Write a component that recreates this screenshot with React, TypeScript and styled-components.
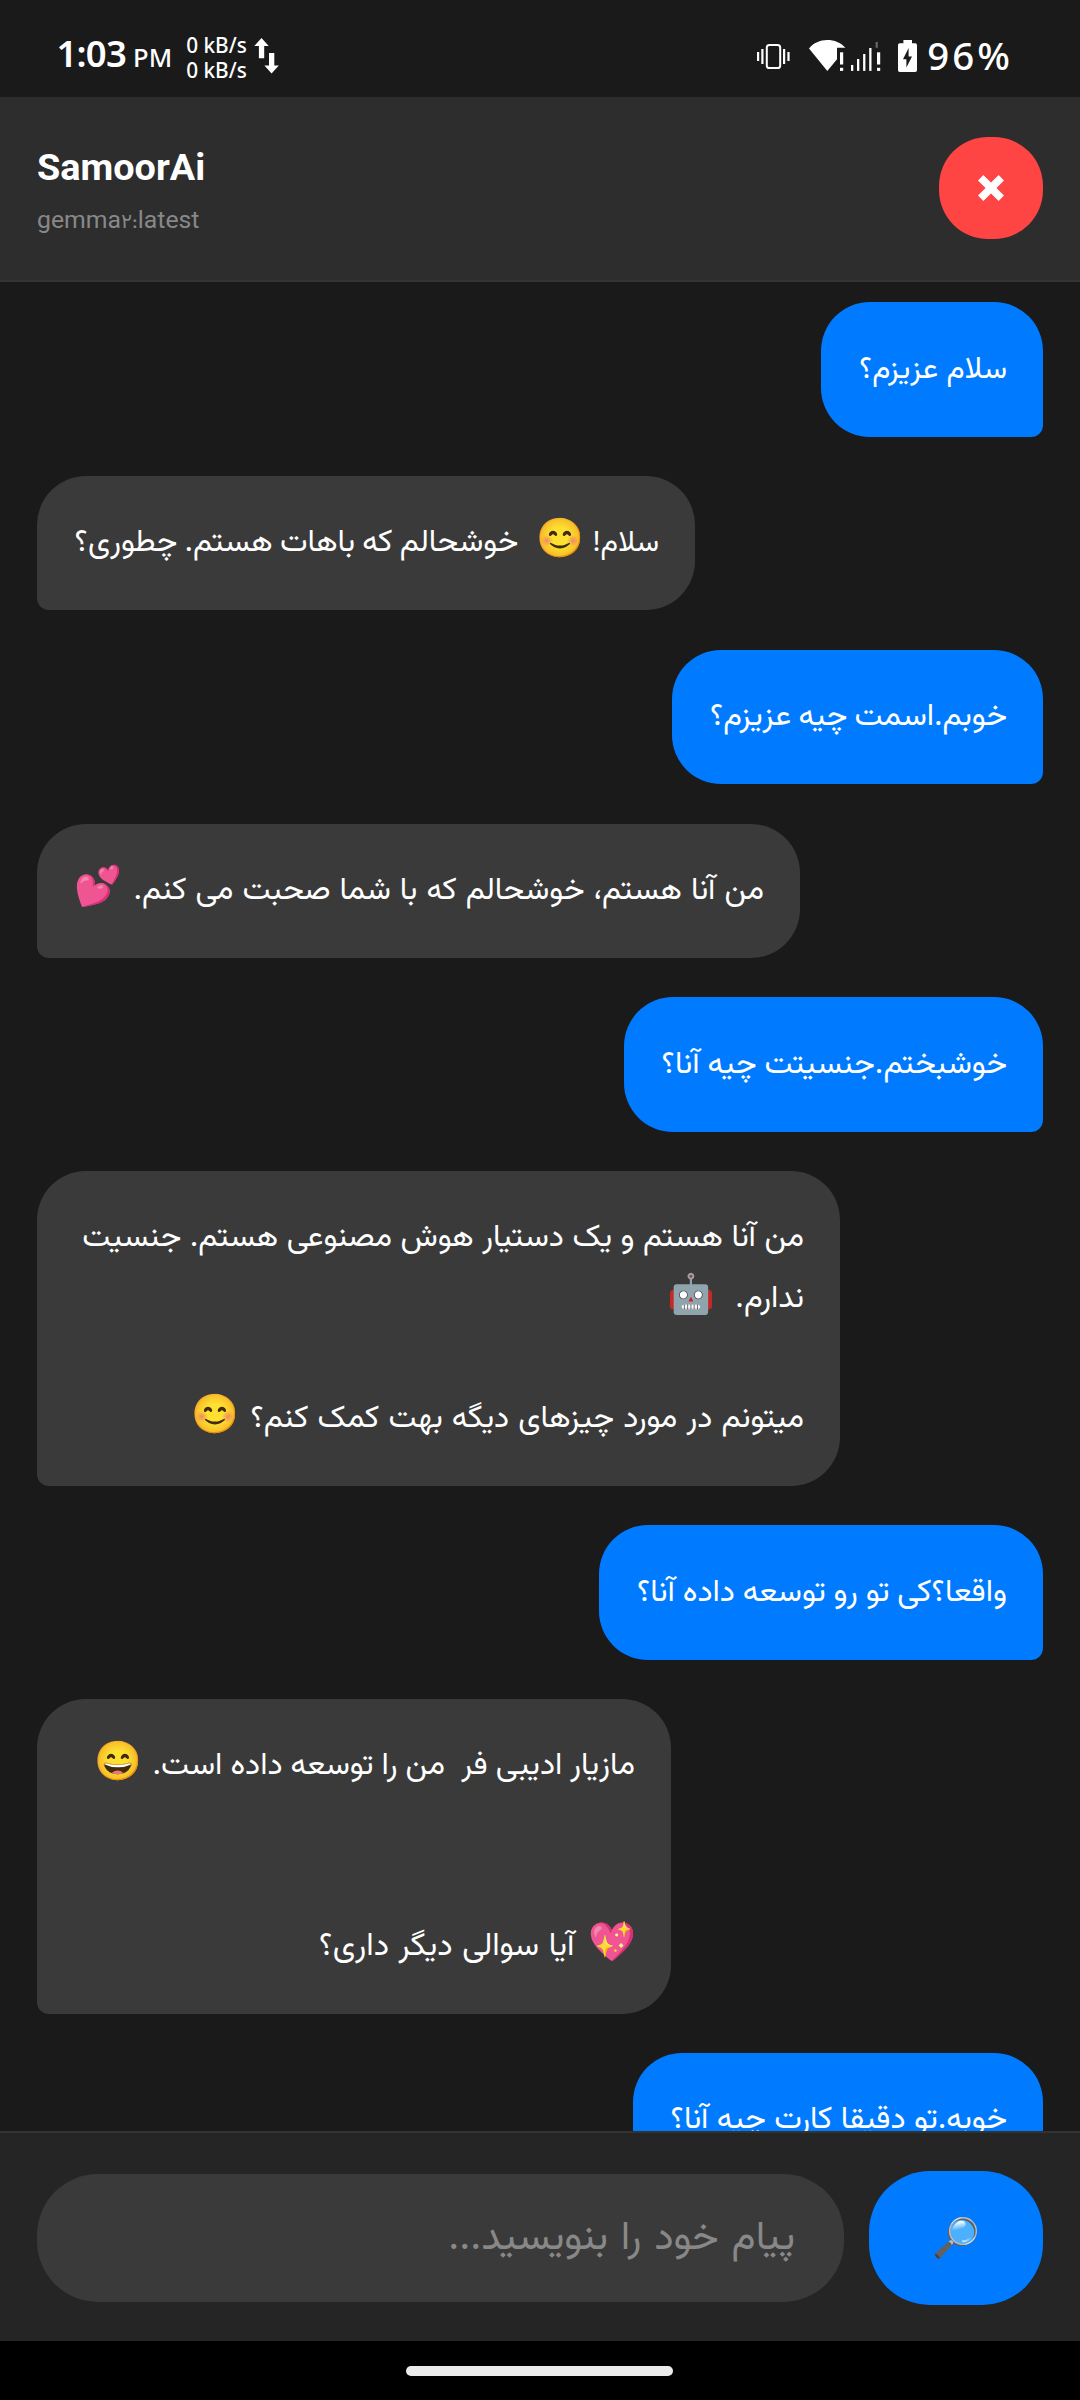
import React from "react";
import styled, { createGlobalStyle } from "styled-components";

const persian = '"Vazirmatn", "DejaVu Sans", sans-serif';
const latin = 'Roboto, "Noto Sans", sans-serif';

const GlobalStyle = createGlobalStyle`
  *, *::before, *::after { box-sizing: border-box; }
  html, body { margin: 0; background: #1a1a1a; }
`;

const Screen = styled.div`
  display: flex;
  flex-direction: column;
  width: 1080px;
  height: 2400px;
  overflow: hidden;
  background: #1a1a1a;
  color: #fff;
  font-family: ${latin};
`;

/* ---------- status bar ---------- */

const StatusBar = styled.div`
  display: flex;
  align-items: center;
  flex: none;
  height: 97px;
  padding: 12px 67px 0 56.5px;
  font-family: "Noto Sans", "Open Sans", sans-serif;
  font-weight: 500;
  white-space: nowrap;
`;

const Clock = styled.div`
  padding-top: 2px;
  font-size: 36.5px;
  font-weight: 600;
  letter-spacing: -0.8px;
  line-height: 44px;
`;

const Meridiem = styled.span`
  margin-left: 7px;
  font-size: 25.6px;
  font-weight: 500;
  letter-spacing: 0;
`;

const NetSpeed = styled.div`
  margin: 0 7px 0 14px;
  padding-top: 6px;
  font-size: 20.8px;
  line-height: 25px;
`;

const StatusIcons = styled.div`
  display: flex;
  align-items: center;
  margin-left: auto;
`;

const Icon = styled.svg<{ $ml?: number }>`
  display: block;
  flex: none;
  height: 36px;
  margin: 2px 0 0 ${(p) => p.$ml ?? 0}px;
`;

const Battery = styled.span`
  margin-left: 10px;
  font-size: 38.4px;
  letter-spacing: 3px;
  line-height: 44px;
`;

/* ---------- header ---------- */

const Header = styled.header`
  display: flex;
  align-items: center;
  justify-content: space-between;
  flex: none;
  height: 185px;
  padding: 0 37px 1px;
  background: #2d2d2d;
  border-bottom: 2px solid #333;
`;

const Heading = styled.div`
  padding-top: 6px;
`;

const Title = styled.h1`
  margin: 0;
  font-size: 37.8px;
  font-weight: 700;
  line-height: 46px;
`;

const Model = styled.div`
  height: 36px;
  margin-top: 12px;
  color: #888;
  font-size: 24.8px;
  line-height: 36px;
`;

const ModelTag = styled.span`
  font-family: ${persian};
  font-size: 21px;
  line-height: 1;
`;

const CloseButton = styled.button`
  display: flex;
  align-items: center;
  justify-content: center;
  width: 104px;
  height: 102px;
  padding: 0;
  border: 0;
  border-radius: 49px;
  background: #ff4444;
`;

/* ---------- chat ---------- */

const Chat = styled.main`
  display: flex;
  flex-direction: column;
  gap: 39.3px;
  flex: 1;
  min-height: 0;
  padding: 20.2px 37px 0;
  overflow: hidden;
`;

const Bubble = styled.div<{ $mine?: boolean; $width: number }>`
  flex: none;
  align-self: ${(p) => (p.$mine ? "flex-end" : "flex-start")};
  width: ${(p) => p.$width}px;
  padding: 38.4px 36px 36px;
  border-radius: ${(p) => (p.$mine ? "49px 49px 12px 49px" : "49px 49px 49px 12px")};
  background: ${(p) => (p.$mine ? "#007bff" : "#3a3a3a")};
  direction: rtl;
  font-family: ${persian};
  font-size: 31.5px;
`;

const Line = styled.p`
  height: 60.1px;
  margin: 0;
  line-height: 60px;
  white-space: pre;
`;

const Words = styled.span<{ $space: number; $size: number }>`
  font-size: ${(p) => p.$size}px;
  line-height: 1;
  word-spacing: ${(p) => p.$space}px;
`;

const Emoji = styled.span`
  display: inline-block;
  width: 47px;
  margin: 0 3px 0 4px;
  font-family: "Noto Color Emoji", sans-serif;
  font-size: 38.4px;
  line-height: 1;
  text-align: center;
  direction: ltr;
  &:first-child { margin-right: 0; }
`;

/* ---------- composer ---------- */

const Composer = styled.footer`
  display: flex;
  align-items: center;
  gap: 25px;
  flex: none;
  height: 210px;
  padding: 2px 37px 0;
  border-top: 2px solid #333;
  background: #252525;
`;

const Field = styled.input`
  flex: 1;
  min-width: 0;
  height: 128px;
  padding: 2px 49px 0;
  border: 0;
  border-radius: 61px;
  background: #3a3a3a;
  color: #fff;
  direction: rtl;
  font-family: ${persian};
  font-size: 40.5px;
  word-spacing: 2px;
  &::placeholder { color: #888; opacity: 1; }
`;

const SendButton = styled.button`
  display: flex;
  align-items: center;
  justify-content: center;
  width: 174px;
  height: 134px;
  padding: 0;
  border: 0;
  border-radius: 61px;
  background: #007bff;
  ${Emoji} { margin: 0; }
`;

const NavBar = styled.div`
  display: flex;
  align-items: center;
  justify-content: center;
  flex: none;
  height: 59px;
  padding-right: 1px;
  background: #000;
`;

const NavPill = styled.div`
  width: 267px;
  height: 10px;
  border-radius: 5px;
  background: #ebebeb;
`;

/* `spaces` and `sizes` adjust the word gap and type size of each run of words between emoji. */
type Row = { text: string; spaces?: number[]; sizes?: number[] };
type Message = { mine?: boolean; width: number; lines: Row[] };

const messages: Message[] = [
  { mine: true, width: 222, lines: [{ text: "سلام عزیزم؟", spaces: [0.2], sizes: [30.5] }] },
  { width: 658, lines: [{ text: "سلام! 😊  خوشحالم که باهات هستم. چطوری؟", spaces: [-2.3, -1.3], sizes: [29.5] }] },
  { mine: true, width: 371, lines: [{ text: "خوبم.اسمت چیه عزیزم؟", spaces: [-1.2] }] },
  { width: 763, lines: [{ text: "من آنا هستم، خوشحالم که با شما صحبت می کنم. 💕", spaces: [0.6] }] },
  { mine: true, width: 419, lines: [{ text: "خوشبختم.جنسیتت چیه آنا؟", spaces: [-0.4] }] },
  {
    width: 803,
    lines: [
      { text: "من آنا هستم و یک دستیار هوش مصنوعی هستم. جنسیت", spaces: [0.1] },
      { text: "ندارم.  🤖", spaces: [0.5] },
      { text: "" },
      { text: "میتونم در مورد چیزهای دیگه بهت کمک کنم؟ 😊", spaces: [0.7] },
    ],
  },
  { mine: true, width: 444, lines: [{ text: "واقعا؟کی تو رو توسعه داده آنا؟", spaces: [-0.6] }] },
  {
    width: 634,
    lines: [
      { text: "مازیار ادیبی فر  من را توسعه داده است. 😄", spaces: [-0.4] },
      { text: "" },
      { text: "" },
      { text: "💖 آیا سوالی دیگر داری؟", spaces: [1], sizes: [32] },
    ],
  },
  { mine: true, width: 410, lines: [{ text: "خوبه.تو دقیقا کارت چیه آنا؟" }] },
];

const emojiPattern = /(\p{Extended_Pictographic})/u;

function RichText({ text, spaces = [], sizes = [] }: Row) {
  let run = 0;
  return (
    <>
      {text
        .split(emojiPattern)
        .filter(Boolean)
        .map((part, i) => {
          if (emojiPattern.test(part)) return <Emoji key={i}>{part}</Emoji>;
          const n = run++;
          return (
            <Words key={i} $space={spaces[n] ?? 0} $size={sizes[n] ?? 31.5}>
              {part}
            </Words>
          );
        })}
    </>
  );
}

function TrafficArrows() {
  return (
    <Icon width="26" viewBox="253 38 26 36" fill="#fff">
      <path d="M260.5 38L267.7 46H263.2V58.3H257.9V46H253.3Z" />
      <path d="M268 53H273.3V65.5H277.8L270.6 73.4L263.4 65.5H268Z" />
    </Icon>
  );
}

function VibrateIcon() {
  return (
    <Icon width="35" viewBox="756 38 35 36" fill="#fff">
      <rect x="766.8" y="45" width="13.4" height="23" rx="2.6" fill="none" stroke="#fff" strokeWidth="2" />
      <rect x="761.3" y="49" width="2.2" height="15" />
      <rect x="757" y="52" width="2.2" height="9" />
      <rect x="783" y="49" width="2.2" height="15" />
      <rect x="787.4" y="52" width="2.2" height="9" />
    </Icon>
  );
}

function NetworkIcon() {
  return (
    <Icon $ml={18} width="72" viewBox="809 38 72 36" fill="#fff">
      <path d="M827.3 70.9L809 48.4C813.5 43 820 40 827.3 40C834.5 40 840.5 42.6 845.4 47.7H837V59.2Z" />
      <rect x="840" y="52.3" width="3.2" height="12.2" />
      <rect x="840" y="67.8" width="3.2" height="3.1" />
      <rect x="851" y="65" width="2.3" height="5.9" />
      <rect x="857" y="59" width="2.3" height="11.9" />
      <rect x="863.1" y="54" width="2.3" height="16.9" />
      <rect x="869.2" y="48" width="2.3" height="22.9" />
      <rect x="875.6" y="42" width="2.2" height="5.8" fill="#666" />
      <rect x="877" y="52.3" width="3.2" height="12.2" />
      <rect x="877" y="67.8" width="3.2" height="3.1" />
    </Icon>
  );
}

function BatteryIcon() {
  return (
    <Icon $ml={17} width="19" viewBox="898 38 19 36">
      <path
        fill="#fff"
        d="M903.4 40H912V43.3H915.2A1.8 1.8 0 0 1 917 45.1V70.2A1.8 1.8 0 0 1 915.2 72H899.8A1.8 1.8 0 0 1 898 70.2V45.1A1.8 1.8 0 0 1 899.8 43.3H903.4Z"
      />
      <path fill="#1a1a1a" d="M908.6 48V56.5H912L906.4 67.5V59.3H903Z" />
    </Icon>
  );
}

export default function App() {
  return (
    <Screen>
      <GlobalStyle />
      <StatusBar>
        <Clock>
          1:03<Meridiem>PM</Meridiem>
        </Clock>
        <NetSpeed>
          <div>0 kB/s</div>
          <div>0 kB/s</div>
        </NetSpeed>
        <TrafficArrows />
        <StatusIcons>
          <VibrateIcon />
          <NetworkIcon />
          <BatteryIcon />
          <Battery>96%</Battery>
        </StatusIcons>
      </StatusBar>

      <Header>
        <Heading>
          <Title>SamoorAi</Title>
          <Model>
            gemma<ModelTag>۲:</ModelTag>latest
          </Model>
        </Heading>
        <CloseButton aria-label="Close">
          <svg width="26" height="26" viewBox="0 0 26 26" stroke="#fff" strokeWidth="7.6">
            <path d="M2.7 2.7L23.3 23.3M23.3 2.7L2.7 23.3" />
          </svg>
        </CloseButton>
      </Header>

      <Chat>
        {messages.map((m, i) => (
          <Bubble key={i} $mine={m.mine} $width={m.width}>
            {m.lines.map((l, j) => (
              <Line key={j}>
                <RichText {...l} />
              </Line>
            ))}
          </Bubble>
        ))}
      </Chat>

      <Composer>
        <Field placeholder="پیام خود را بنویسید..." />
        <SendButton aria-label="Search">
          <Emoji>🔎</Emoji>
        </SendButton>
      </Composer>

      <NavBar>
        <NavPill />
      </NavBar>
    </Screen>
  );
}
